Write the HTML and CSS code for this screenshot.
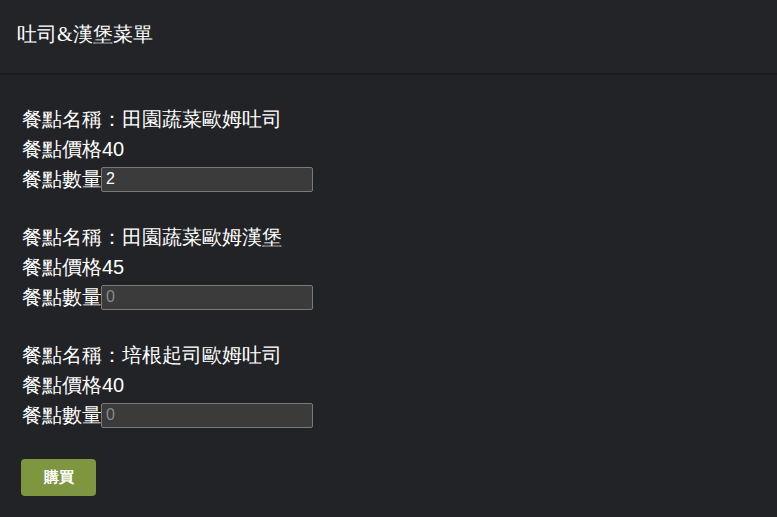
FILE: index.html
```html
<!DOCTYPE html>
<html lang="zh-Hant">
<head>
<meta charset="utf-8">
<title>吐司&amp;漢堡菜單</title>
<link rel="stylesheet" href="styles.css">
</head>
<body>
<header class="topbar">
  <h1 class="title">吐司&amp;漢堡菜單</h1>
</header>
<main class="menu">
  <section class="item">
    <div class="line">餐點名稱：田園蔬菜歐姆吐司</div>
    <div class="line">餐點價格<span class="num">40</span></div>
    <div class="line">餐點數量<input class="qty" type="text" value="2"></div>
  </section>
  <section class="item">
    <div class="line">餐點名稱：田園蔬菜歐姆漢堡</div>
    <div class="line">餐點價格<span class="num">45</span></div>
    <div class="line">餐點數量<input class="qty" type="text" placeholder="0"></div>
  </section>
  <section class="item">
    <div class="line">餐點名稱：培根起司歐姆吐司</div>
    <div class="line">餐點價格<span class="num">40</span></div>
    <div class="line">餐點數量<input class="qty" type="text" placeholder="0"></div>
  </section>
  <button class="buy" type="button">購買</button>
</main>
</body>
</html>
```
FILE: styles.css
```css
html, body {
  margin: 0;
  padding: 0;
  background: #222326;
  color: #ffffff;
  font-family: "Liberation Serif", serif;
}
.topbar {
  height: 73px;
  border-bottom: 2px solid #1b1c1e;
  background: #232427;
  display: flex;
  align-items: center;
  padding: 0 17px;
}
.title {
  margin: 0;
  font-size: 20px;
  font-weight: normal;
  padding-bottom: 4px;
}
.menu {
  padding: 30px 22px 22px;
  display: flex;
  flex-direction: column;
  align-items: flex-start;
  gap: 29px;
}
.item {
  display: flex;
  flex-direction: column;
}
.line {
  font-size: 20px;
  height: 29.7px;
  display: flex;
  align-items: center;
}
.num {
  font-family: "Liberation Sans", sans-serif;
}
.qty {
  box-sizing: border-box;
  width: 212px;
  height: 25px;
  margin: 0 0 0 -1px;
  padding: 0 4px;
  background: #3b3b3b;
  border: 1px solid #7a7a7a;
  border-radius: 2px;
  color: #ffffff;
  font-family: "Liberation Sans", sans-serif;
  font-size: 16px;
  outline: none;
}
.qty::placeholder {
  color: #8a8a8a;
}
.buy {
  margin: 0 0 0 -1px;
  width: 75px;
  height: 37px;
  border: none;
  border-radius: 4px;
  background: #7f9640;
  color: #ffffff;
  font-family: "Liberation Serif", serif;
  font-weight: bold;
  font-size: 15px;
  cursor: pointer;
}
```
